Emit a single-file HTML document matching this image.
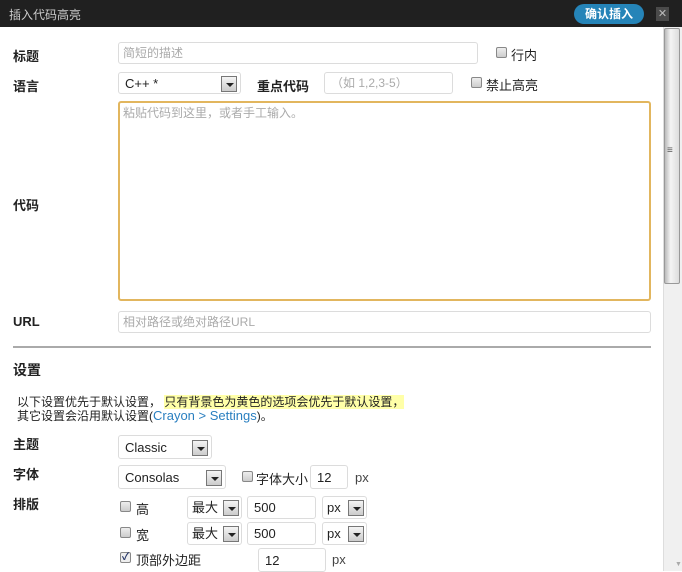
<!DOCTYPE html>
<html><head><meta charset="utf-8"><style>
*{box-sizing:border-box;margin:0;padding:0}
body{width:682px;height:571px;overflow:hidden;background:#fff;position:relative;font-family:"Liberation Sans","Noto Sans CJK SC",sans-serif;font-size:12px;color:#222}
.a{position:absolute}
.lbl{position:absolute;font-weight:bold;font-size:13px;left:13px}
.in{position:absolute;border:1px solid #dcdcdc;border-radius:3px;background:#fff;color:#aaa;font-size:12px;padding:4px 4px;line-height:13px}
.sel{position:absolute;border:1px solid #dcdcdc;border-radius:3px;background:#fff;color:#222;font-size:13px;padding:4px 6px;line-height:14px}
.arr{position:absolute;right:3px;top:3px;width:16px;height:16px;border:1px solid #777;background:linear-gradient(#f4f4f4,#ccc)}
.arr:after{content:"";position:absolute;left:4px;top:6px;border-left:4px solid transparent;border-right:4px solid transparent;border-top:4px solid #222}
.cb{position:absolute;width:11px;height:11px;border:1px solid #888;border-radius:2px;background:linear-gradient(#eee,#ccc)}
.t{position:absolute;font-size:12px;color:#222;white-space:nowrap}
</style></head><body>
<div class="a" style="left:0;top:0;width:682px;height:27px;background:#202020"></div>
<div class="t" style="left:9px;top:6px;color:#ccc;font-size:12px">插入代码高亮</div>
<div class="a" style="left:574px;top:4px;width:70px;height:20px;border-radius:10px;background:#2584b8;color:#fff;font-weight:bold;font-size:12px;text-align:center;line-height:20px">确认插入</div>
<div class="a" style="left:656px;top:7px;width:13px;height:14px;background:#4a4a4a;color:#bbb;font-size:11px;text-align:center;line-height:14px">✕</div>
<div class="a" style="left:663px;top:27px;width:19px;height:544px;background:#f0f0f0;border-left:1px solid #ddd"></div>
<div class="a" style="left:664px;top:28px;width:16px;height:256px;background:linear-gradient(90deg,#bbb,#f4f4f4 40%,#ddd);border:1px solid #999;border-radius:2px"></div>
<div class="t" style="left:667px;top:145px;color:#555;font-size:10px">≡</div>
<div class="t" style="left:675px;top:561px;color:#aaa;font-size:7px">▼</div>

<div class="lbl" style="top:46px">标题</div>
<div class="in" style="left:118px;top:42px;width:360px;height:22px">简短的描述</div>
<div class="cb" style="left:496px;top:47px"></div><div class="t" style="left:511px;top:45px;font-size:13px">行内</div>

<div class="lbl" style="top:76px">语言</div>
<div class="sel" style="left:118px;top:72px;width:123px;height:22px">C++ *<div class="arr"></div></div>
<div class="a" style="left:257px;top:76px;font-weight:bold;font-size:13px">重点代码</div>
<div class="in" style="left:324px;top:72px;width:129px;height:22px;padding-left:6px">（如 1,2,3-5）</div>
<div class="cb" style="left:471px;top:77px"></div><div class="t" style="left:486px;top:75px;font-size:13px">禁止高亮</div>

<div class="in" style="left:118px;top:101px;width:533px;height:200px;border:2px solid #e2b65e;color:#aaa;padding:4px 3px">粘贴代码到这里，或者手工输入。</div>
<div class="lbl" style="top:195px">代码</div>

<div class="lbl" style="top:314px">URL</div>
<div class="in" style="left:118px;top:311px;width:533px;height:22px">相对路径或绝对路径URL</div>

<div class="a" style="left:13px;top:346px;width:638px;height:2px;background:#aaa"></div>
<div class="a" style="left:13px;top:360px;font-weight:bold;font-size:14px">设置</div>
<div class="t" style="left:17px;top:393px">以下设置优先于默认设置， <span style="background:#ffffa8">只有背景色为黄色的选项会优先于默认设置，</span></div>
<div class="t" style="left:17px;top:407px">其它设置会沿用默认设置(<span style="color:#2a7fc0;font-size:13px">Crayon &gt; Settings</span>)。</div>

<div class="lbl" style="top:434px">主题</div>
<div class="sel" style="left:118px;top:435px;width:94px;height:24px;padding-top:5px">Classic<div class="arr" style="top:4px"></div></div>
<div class="lbl" style="top:464px">字体</div>
<div class="sel" style="left:118px;top:465px;width:108px;height:24px;padding-top:5px">Consolas<div class="arr" style="top:4px"></div></div>
<div class="cb" style="left:242px;top:471px"></div><div class="t" style="left:256px;top:469px;font-size:13px">字体大小</div>
<div class="sel" style="left:310px;top:465px;width:38px;height:24px;padding-top:5px">12</div>
<div class="t" style="left:355px;top:470px;font-size:13px;color:#444">px</div>

<div class="lbl" style="top:494px">排版</div>
<div class="cb" style="left:120px;top:501px"></div><div class="t" style="left:136px;top:499px;font-size:13px">高</div>
<div class="sel" style="left:187px;top:496px;width:55px;height:23px;padding:4px 4px">最大<div class="arr" style="top:3px;right:2px"></div></div>
<div class="sel" style="left:247px;top:496px;width:69px;height:23px">500</div>
<div class="sel" style="left:322px;top:496px;width:45px;height:23px;padding:4px 4px">px<div class="arr" style="top:3px;right:2px"></div></div>
<div class="cb" style="left:120px;top:527px"></div><div class="t" style="left:136px;top:525px;font-size:13px">宽</div>
<div class="sel" style="left:187px;top:522px;width:55px;height:23px;padding:4px 4px">最大<div class="arr" style="top:3px;right:2px"></div></div>
<div class="sel" style="left:247px;top:522px;width:69px;height:23px">500</div>
<div class="sel" style="left:322px;top:522px;width:45px;height:23px;padding:4px 4px">px<div class="arr" style="top:3px;right:2px"></div></div>
<div class="cb" style="left:120px;top:552px;background:#eee;color:#236;font-size:10px;line-height:9px;text-align:center;font-weight:bold">✓</div><div class="t" style="left:136px;top:550px;font-size:13px">顶部外边距</div>
<div class="sel" style="left:258px;top:548px;width:68px;height:24px;padding-top:5px">12</div>
<div class="t" style="left:332px;top:552px;font-size:13px;color:#444">px</div>
</body></html>
